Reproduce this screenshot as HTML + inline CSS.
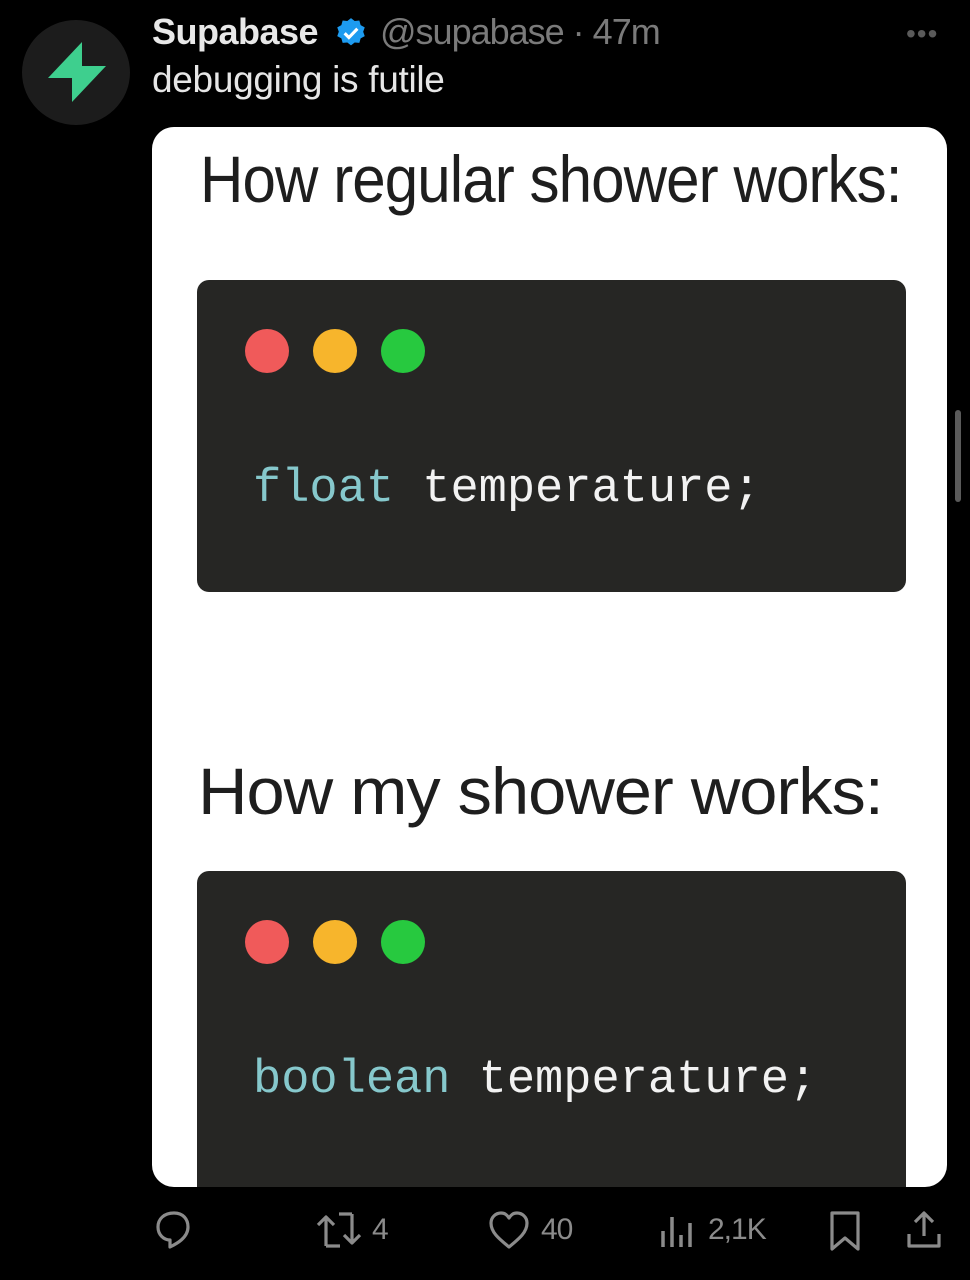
<!DOCTYPE html>
<html><head><meta charset="utf-8"><style>
html,body{margin:0;padding:0;background:#000;width:970px;height:1280px;overflow:hidden;font-family:"Liberation Sans",sans-serif}
.abs{position:absolute}
.card{position:absolute;left:152px;top:127px;width:795px;height:1060px;background:#fff;border-radius:22px;overflow:hidden}
.h{position:absolute;font-family:"Liberation Sans Narrow","Liberation Sans",sans-serif;font-size:66px;color:#1e1e1e;white-space:nowrap;transform-origin:left top;letter-spacing:-1px}
.code{position:absolute;left:45px;width:709px;background:#262624;border-radius:12px}
.dot{position:absolute;width:44px;height:44px;border-radius:50%;top:49px}
.txt{position:absolute;left:56px;font-family:"Liberation Mono","DejaVu Sans Mono",monospace;font-size:47px;color:#f2f2f2;white-space:pre}
.k{color:#86c8cc}
.act{position:absolute;top:1213px;color:#8b8b8b;font-size:30px;letter-spacing:-1px}
</style></head><body>
<div class="abs" style="left:22px;top:20px;width:108px;height:105px;border-radius:50%;background:#1c1c1c"></div>
<svg class="abs" style="left:44px;top:38px" width="66" height="66" viewBox="0 0 66 66"><path d="M38 4 L38 28 L62 28 L28 64 L28 40 L4 40 Z" fill="#3ecf8e"/></svg>
<div class="abs" style="left:152px;top:11px;font-size:36px;font-weight:bold;color:#e8e8e8;letter-spacing:-0.5px">Supabase</div>
<svg class="abs" style="left:334px;top:16px" width="34" height="34" viewBox="0 0 24 24"><path d="M12 1.5l2.6 2 3.3-.3.9 3.2 2.9 1.6-1.1 3.1 1.1 3.1-2.9 1.6-.9 3.2-3.3-.3-2.6 2-2.6-2-3.3.3-.9-3.2-2.9-1.6 1.1-3.1-1.1-3.1 2.9-1.6.9-3.2 3.3.3z" fill="#1d9bf0"/><path d="M7.5 12.2l3 3 6-6.2" stroke="#fff" stroke-width="2.2" fill="none"/></svg>
<div class="abs" style="left:380px;top:11px;font-size:36px;color:#7a7a7a;letter-spacing:-1px">@supabase · 47m</div>
<div class="abs" style="left:906px;top:18px;font-size:28px;color:#5a5a5a;letter-spacing:1px">•••</div>
<div class="abs" style="left:152px;top:59px;font-size:37px;color:#e6e6e6;letter-spacing:-0.3px">debugging is futile</div>
<div class="abs" style="left:955px;top:410px;width:6px;height:92px;border-radius:3px;background:#5a5a5a"></div>
<div class="card">
<div class="h" style="left:48px;top:14px;transform:scaleX(0.91)">How regular shower works:</div>
<div class="code" style="top:153px;height:312px">
<div class="dot" style="left:48px;background:#f05a5a"></div>
<div class="dot" style="left:116px;background:#f7b52c"></div>
<div class="dot" style="left:184px;background:#27c93f"></div>
<div class="txt" style="top:183px"><span class="k">float</span> temperature;</div>
</div>
<div class="h" style="left:46px;top:626px;transform:scaleX(1.04)">How my shower works:</div>
<div class="code" style="top:744px;height:330px">
<div class="dot" style="left:48px;background:#f05a5a"></div>
<div class="dot" style="left:116px;background:#f7b52c"></div>
<div class="dot" style="left:184px;background:#27c93f"></div>
<div class="txt" style="top:183px"><span class="k">boolean</span> temperature;</div>
</div>
</div>
<svg class="abs" style="left:154px;top:1209px" width="40" height="42" viewBox="0 0 40 42"><path d="M20 4C10 4 4 10 4 18c0 8 6 13 12 13v7c6-3 18-9 18-20C34 10 29 4 20 4z" fill="none" stroke="#8b8b8b" stroke-width="3.2" stroke-linejoin="round"/></svg>
<svg class="abs" style="left:315px;top:1210px" width="50" height="40" viewBox="0 0 50 40"><path d="M11 36V8M3 15l8-8 8 8M11 36h14M37 4v28M29 25l8 8 8-8M37 4H24" fill="none" stroke="#8b8b8b" stroke-width="3.2" stroke-linejoin="round"/></svg>
<div class="act" style="left:372px">4</div>
<svg class="abs" style="left:488px;top:1210px" width="42" height="40" viewBox="0 0 42 40"><path d="M21 37C10 28 3 22 3 13 3 7 8 3 13 3c4 0 6 2 8 5 2-3 4-5 8-5 5 0 10 4 10 10 0 9-7 15-18 24z" fill="none" stroke="#8b8b8b" stroke-width="3.2" stroke-linejoin="round"/></svg>
<div class="act" style="left:541px">40</div>
<svg class="abs" style="left:660px;top:1211px" width="34" height="38" viewBox="0 0 34 38"><path d="M3 20v16M12 6v30M21 24v12M30 12v24" stroke="#8b8b8b" stroke-width="3.5"/></svg>
<div class="act" style="left:708px">2,1K</div>
<svg class="abs" style="left:828px;top:1210px" width="34" height="42" viewBox="0 0 34 42"><path d="M4 3h26v36L17 28 4 39z" fill="none" stroke="#8b8b8b" stroke-width="3.2" stroke-linejoin="round"/></svg>
<svg class="abs" style="left:904px;top:1210px" width="40" height="40" viewBox="0 0 40 40"><path d="M20 26V4M11 12l9-9 9 9M5 24v12h30V24" fill="none" stroke="#8b8b8b" stroke-width="3.2" stroke-linejoin="round"/></svg>
</body></html>
